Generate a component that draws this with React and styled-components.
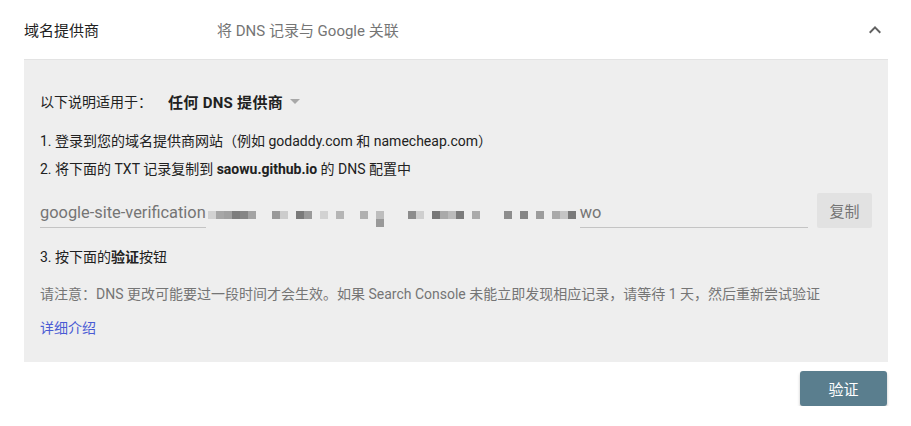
import React from 'react';
import styled, { createGlobalStyle } from 'styled-components';

const GlobalStyle = createGlobalStyle`
  body {
    margin: 0;
    background: #fff;
    font-family: Roboto, "Noto Sans CJK SC", sans-serif;
    color: #212121;
  }
`;

const Page = styled.div`
  width: 864px;
  padding-left: 24px;
`;

const Header = styled.div`
  height: 59px;
  display: flex;
  align-items: center;
  border-bottom: 1px solid #e3e3e3;
`;

const Title = styled.div`
  width: 193px;
  font-size: 15px;
  color: #212121;
`;

const Subtitle = styled.div`
  flex: 1;
  font-size: 15px;
  color: #757575;
`;

const Chevron = styled.svg`
  width: 24px;
  height: 24px;
  fill: #616161;
  margin-right: 1px;
`;

const Panel = styled.div`
  background: #eeeeee;
  padding: 23px 16px 20px 16px;
`;

const AppliesRow = styled.div`
  height: 36px;
  display: flex;
  align-items: center;
  font-size: 14px;
`;

const AppliesLabel = styled.span`
  width: 128px;
`;

const Provider = styled.span`
  display: flex;
  align-items: center;
  font-size: 15px;
  font-weight: bold;
  letter-spacing: 0.3px;
  color: #212121;
  cursor: pointer;

  svg {
    width: 24px;
    height: 24px;
    fill: #a8a8a8;
    margin-left: 0;
  }
`;

const Line = styled.div`
  font-size: ${p => p.$small ? '13px' : '14px'};
  line-height: 28px;
  color: ${p => p.$muted ? '#757575' : '#212121'};
  margin-top: ${p => p.$gap || 0}px;

  b {
    font-weight: bold;
  }
`;

const FieldRow = styled.div`
  margin-top: 10px;
  height: 35px;
  display: flex;
  align-items: stretch;
  gap: 9px;
`;

const Field = styled.div`
  flex: 1;
  display: flex;
  align-items: flex-end;
  font-size: 16.4px;
  color: #757575;
`;

const FieldText = styled.span`
  border-bottom: 1px solid #c4c4c4;
  padding-bottom: 4px;
  line-height: 20px;
  flex: ${p => p.$grow ? 1 : 'none'};
`;

const Mosaic = styled.svg`
  flex: none;
  margin-left: 2px;
`;

const FlatButton = styled.button`
  width: 55px;
  border: none;
  border-radius: 2px;
  background: #e2e2e2;
  color: #757575;
  font-family: inherit;
  font-size: 15px;
  cursor: pointer;
`;

const Link = styled.a`
  color: #4a5bd4;
  text-decoration: none;
  font-size: 14px;
`;

const Footer = styled.div`
  display: flex;
  justify-content: flex-end;
  padding: 9px 1px 0 0;
`;

const RaisedButton = styled.button`
  width: 87px;
  height: 35px;
  border: none;
  border-radius: 3px;
  background: #5a7e8e;
  color: #fff;
  font-family: inherit;
  font-size: 15px;
  box-shadow: 0 2px 3px rgba(0, 0, 0, 0.25);
  cursor: pointer;
`;

// redacted part of the verification token
const blocks = [
  [0, 0, '#d2d2d2'], [8, 0, '#a6a6a6'], [16, 0, '#a0a0a0'], [24, 0, '#7d7d7d'],
  [32, 0, '#858585'], [40, 0, '#a3a3a3'], [64, 0, '#999999'], [72, 0, '#cccccc'],
  [88, 0, '#7a7a7a'], [96, 0, '#9a9a9a'], [112, 0, '#d2d2d2'], [128, 0, '#b5b5b5'],
  [152, 0, '#b0b0b0'], [168, 0, '#bdbdbd'], [168, 8, '#999999'], [200, 0, '#8c8c8c'],
  [208, 0, '#cfcfcf'], [224, 0, '#777777'], [232, 0, '#aaaaaa'], [240, 0, '#bbbbbb'],
  [248, 0, '#7b7b7b'], [264, 0, '#aaaaaa'], [296, 0, '#8d8d8d'], [312, 0, '#858585'],
  [328, 0, '#9c9c9c'], [344, 0, '#a9a9a9'], [352, 0, '#c5c5c5'], [360, 0, '#7a7a7a'],
];

const App = () => (
  <Page>
    <GlobalStyle />
    <Header>
      <Title>域名提供商</Title>
      <Subtitle>将 DNS 记录与 Google 关联</Subtitle>
      <Chevron viewBox="0 0 24 24">
        <path d="M7.41 15.41L12 10.83l4.59 4.58L18 14l-6-6-6 6z" />
      </Chevron>
    </Header>
    <Panel>
      <AppliesRow>
        <AppliesLabel>以下说明适用于：</AppliesLabel>
        <Provider>
          任何 DNS 提供商
          <svg viewBox="0 0 24 24"><path d="M7 10l5 5 5-5z" /></svg>
        </Provider>
      </AppliesRow>
      <Line $gap={8}>1. 登录到您的域名提供商网站（例如 godaddy.com 和 namecheap.com）</Line>
      <Line>2. 将下面的 TXT 记录复制到 <b>saowu.github.io</b> 的 DNS 配置中</Line>
      <FieldRow>
        <Field>
          <FieldText>google-site-verification</FieldText>
          <Mosaic width="372" height="17" viewBox="0 0 372 17">
            {blocks.map(([x, y, c], i) => (
              <rect key={i} x={x} y={y} width="8" height="8" fill={c} />
            ))}
          </Mosaic>
          <FieldText $grow>wo</FieldText>
        </Field>
        <FlatButton>复制</FlatButton>
      </FieldRow>
      <Line $gap={15}>3. 按下面的<b>验证</b>按钮</Line>
      <Line $gap={9} $muted>请注意：DNS 更改可能要过一段时间才会生效。如果 Search Console 未能立即发现相应记录，请等待 1 天，然后重新尝试验证</Line>
      <Line $gap={6}><Link href="#">详细介绍</Link></Line>
    </Panel>
    <Footer>
      <RaisedButton>验证</RaisedButton>
    </Footer>
  </Page>
);

export default App;
